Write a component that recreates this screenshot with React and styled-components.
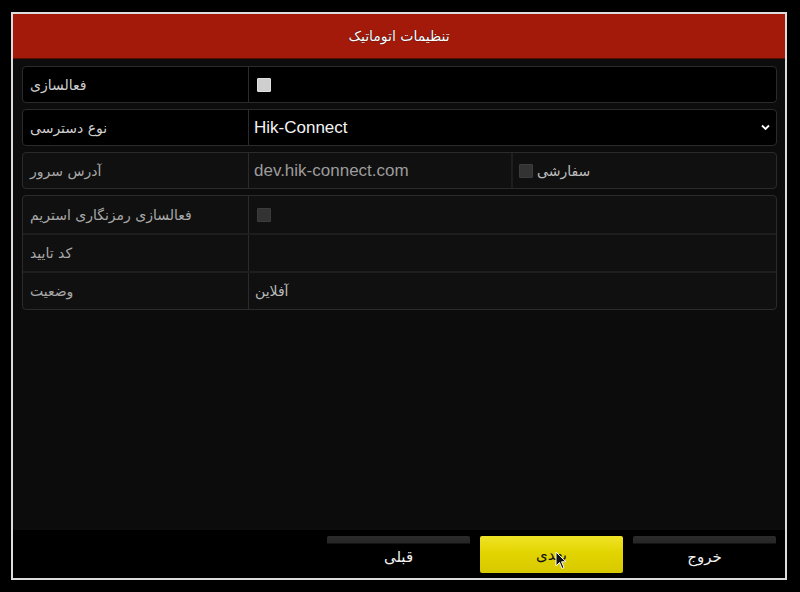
import React from 'react';
import styled, { createGlobalStyle } from 'styled-components';

const Global = createGlobalStyle`
  html, body {
    margin: 0;
    padding: 0;
    background: #000;
  }
  body {
    width: 800px;
    height: 592px;
    overflow: hidden;
    font-family: "DejaVu Sans", "Liberation Sans", sans-serif;
  }
`;

const Frame = styled.div`
  box-sizing: border-box;
  margin: 12px 0 0 11px;
  width: 776px;
  height: 568px;
  border: 2px solid #dcdcdc;
  display: flex;
  flex-direction: column;
  background: #000;
`;

const Header = styled.div`
  height: 44px;
  background: #a3190a;
  border-bottom: 1px solid #5a0d05;
  display: flex;
  align-items: center;
  justify-content: center;
  color: #fff;
  font-size: 14px;
  text-shadow: 0 0 1px #000;
`;

const Body = styled.div`
  flex: 1;
  background: #0c0c0c;
  padding: 7px 8px 0 9px;
  display: flex;
  flex-direction: column;
  gap: 6px;
`;

const Box = styled.div`
  border: 1px solid #2b2b2b;
  border-radius: 4px;
  background: ${p => (p.$dim ? '#101010' : '#000')};
  display: flex;
  flex-direction: column;
`;

const Row = styled.div`
  height: ${p => p.$h || 35}px;
  display: flex;
  & + & {
    border-top: 2px solid #1e1e1e;
  }
`;

const Label = styled.div`
  width: 226px;
  border-right: 1px solid #2b2b2b;
  display: flex;
  align-items: center;
  padding-left: 7px;
  box-sizing: border-box;
  color: ${p => (p.$dim ? '#a8a8a8' : '#cfcfcf')};
  font-size: 14px;
`;

const Value = styled.div`
  flex: ${p => (p.$w ? `0 0 ${p.$w}px` : 1)};
  display: flex;
  align-items: center;
  gap: 4px;
  padding-left: ${p => p.$pad ?? 7}px;
  box-sizing: border-box;
  border-right: ${p => (p.$split ? '2px solid #1e1e1e' : 'none')};
  position: relative;
`;

const Latin = styled.span`
  font-family: "Liberation Sans", Arial, sans-serif;
  font-size: 17px;
  color: ${p => (p.$dim ? '#9c9c9c' : '#f4f4f4')};
`;

const Persian = styled.span`
  font-size: 14px;
  color: ${p => p.$color || '#b8b8b8'};
`;

const Check = styled.span`
  display: inline-block;
  width: 14px;
  height: 14px;
  border-radius: 1px;
  background: ${p => (p.$on ? '#cfcfcf' : '#333')};
  border: 1px solid ${p => (p.$on ? '#e0e0e0' : '#3c3c3c')};
  box-sizing: border-box;
`;

const Chevron = styled.svg`
  position: absolute;
  right: 6px;
  top: 14px;
`;

const Footer = styled.div`
  height: 48px;
  background: #000;
  display: flex;
  justify-content: flex-end;
  gap: 10px;
  padding: 6px 9px 0 0;
  box-sizing: border-box;
`;

const Button = styled.div`
  position: relative;
  width: 143px;
  height: 37px;
  border-radius: 2px;
  display: flex;
  align-items: center;
  justify-content: center;
  padding-top: ${p => (p.$active ? 0 : 4)}px;
  box-sizing: border-box;
  font-size: 15px;
  color: ${p => (p.$active ? '#111' : '#f2f2f2')};
  background: ${p =>
    p.$active
      ? 'linear-gradient(#f0e428, #e2d400 45%, #d8c900)'
      : 'linear-gradient(#2c2c2c 0, #262626 7px, #000 8px, #000 100%)'};
`;

const Cursor = styled.svg`
  position: absolute;
  left: 75px;
  top: 15px;
`;

export default function App() {
  return (
    <>
      <Global />
      <Frame>
        <Header dir="rtl">تنظیمات اتوماتیک</Header>
        <Body>
          <Box>
            <Row>
              <Label><span dir="rtl">فعالسازی</span></Label>
              <Value $pad={8}><Check $on /></Value>
            </Row>
          </Box>
          <Box>
            <Row>
              <Label><span dir="rtl">نوع دسترسی</span></Label>
              <Value $pad={5}>
                <Latin>Hik-Connect</Latin>
                <Chevron width="9" height="7" viewBox="0 0 9 7">
                  <path d="M1 1.5 L4.5 5 L8 1.5" fill="none" stroke="#fff" strokeWidth="1.8" />
                </Chevron>
              </Value>
            </Row>
          </Box>
          <Box $dim>
            <Row>
              <Label $dim><span dir="rtl">آدرس سرور</span></Label>
              <Value $w={264} $pad={5} $split><Latin $dim>dev.hik-connect.com</Latin></Value>
              <Value $pad={6}>
                <Check />
                <Persian dir="rtl" $color="#bdbdbd">سفارشی</Persian>
              </Value>
            </Row>
          </Box>
          <Box $dim>
            <Row $h={37}>
              <Label $dim><span dir="rtl">فعالسازی رمزنگاری استریم</span></Label>
              <Value $pad={8}><Check /></Value>
            </Row>
            <Row $h={36}>
              <Label $dim><span dir="rtl">کد تایید</span></Label>
              <Value />
            </Row>
            <Row $h={36}>
              <Label $dim><span dir="rtl">وضعیت</span></Label>
              <Value $pad={6}><Persian dir="rtl">آفلاین</Persian></Value>
            </Row>
          </Box>
        </Body>
        <Footer>
          <Button><span dir="rtl">قبلی</span></Button>
          <Button $active>
            <span dir="rtl">بعدی</span>
            <Cursor width="12" height="19" viewBox="0 0 12 19">
              <path d="M1 1 L1 15 L4.5 11.5 L7 17.5 L9 16.6 L6.6 10.8 L11 10.8 Z" fill="#111" stroke="#fff" strokeWidth="1" />
            </Cursor>
          </Button>
          <Button><span dir="rtl">خروج</span></Button>
        </Footer>
      </Frame>
    </>
  );
}
